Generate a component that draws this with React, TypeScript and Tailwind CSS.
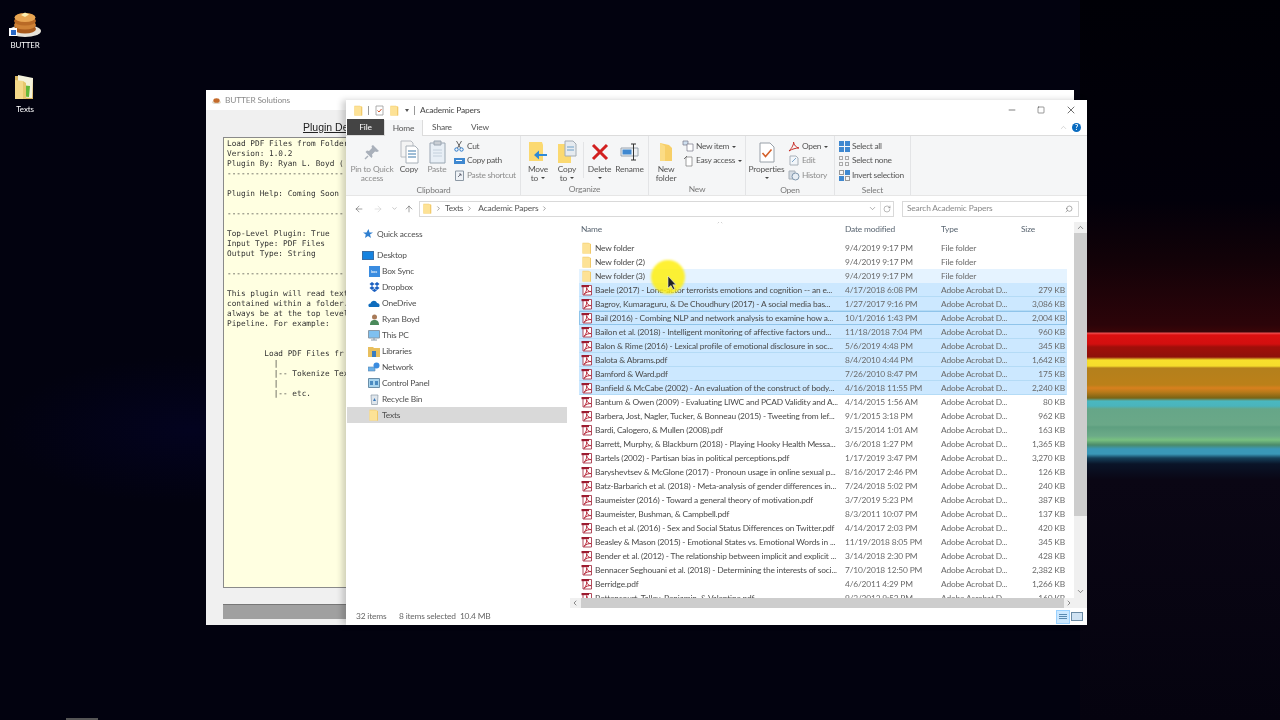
import type { ReactNode } from "react";
import { ArrowLeft, ArrowRight, ArrowUp, ChevronDown, ChevronLeft, ChevronRight, ChevronUp, Minus, RotateCw, Search, Square, X } from "lucide-react";

type FileRow = { name: string; date: string; type: string; size: string; folder?: boolean; sel?: boolean; hover?: boolean; focus?: boolean };

const pdf = "Adobe Acrobat D...";

const files: FileRow[] = [
  { name: "New folder", date: "9/4/2019 9:17 PM", type: "File folder", size: "", folder: true },
  { name: "New folder (2)", date: "9/4/2019 9:17 PM", type: "File folder", size: "", folder: true },
  { name: "New folder (3)", date: "9/4/2019 9:17 PM", type: "File folder", size: "", folder: true, hover: true },
  { name: "Baele (2017) - Lone-actor terrorists emotions and cognition -- an e...", date: "4/17/2018 6:08 PM", type: pdf, size: "279 KB", sel: true },
  { name: "Bagroy, Kumaraguru, & De Choudhury (2017) - A social media bas...", date: "1/27/2017 9:16 PM", type: pdf, size: "3,086 KB", sel: true },
  { name: "Bail (2016) - Combing NLP and network analysis to examine how a...", date: "10/1/2016 1:43 PM", type: pdf, size: "2,004 KB", sel: true, focus: true },
  { name: "Bailon et al. (2018) - Intelligent monitoring of affective factors und...", date: "11/18/2018 7:04 PM", type: pdf, size: "960 KB", sel: true },
  { name: "Balon & Rime (2016) - Lexical profile of emotional disclosure in soc...", date: "5/6/2019 4:48 PM", type: pdf, size: "345 KB", sel: true },
  { name: "Balota & Abrams.pdf", date: "8/4/2010 4:44 PM", type: pdf, size: "1,642 KB", sel: true },
  { name: "Bamford & Ward.pdf", date: "7/26/2010 8:47 PM", type: pdf, size: "175 KB", sel: true },
  { name: "Banfield & McCabe (2002) - An evaluation of the construct of body...", date: "4/16/2018 11:55 PM", type: pdf, size: "2,240 KB", sel: true },
  { name: "Bantum & Owen (2009) - Evaluating LIWC and PCAD Validity and A...", date: "4/14/2015 1:56 AM", type: pdf, size: "80 KB" },
  { name: "Barbera, Jost, Nagler, Tucker, & Bonneau (2015) - Tweeting from lef...", date: "9/1/2015 3:18 PM", type: pdf, size: "962 KB" },
  { name: "Bardi, Calogero, & Mullen (2008).pdf", date: "3/15/2014 1:01 AM", type: pdf, size: "163 KB" },
  { name: "Barrett, Murphy, & Blackburn (2018) - Playing Hooky Health Messa...", date: "3/6/2018 1:27 PM", type: pdf, size: "1,365 KB" },
  { name: "Bartels (2002) - Partisan bias in political perceptions.pdf", date: "1/17/2019 3:47 PM", type: pdf, size: "3,270 KB" },
  { name: "Baryshevtsev & McGlone (2017) - Pronoun usage in online sexual p...", date: "8/16/2017 2:46 PM", type: pdf, size: "126 KB" },
  { name: "Batz-Barbarich et al. (2018) - Meta-analysis of gender differences in...", date: "7/24/2018 5:02 PM", type: pdf, size: "240 KB" },
  { name: "Baumeister (2016) - Toward a general theory of motivation.pdf", date: "3/7/2019 5:23 PM", type: pdf, size: "387 KB" },
  { name: "Baumeister, Bushman, & Campbell.pdf", date: "8/3/2011 10:07 PM", type: pdf, size: "137 KB" },
  { name: "Beach et al. (2016) - Sex and Social Status Differences on Twitter.pdf", date: "4/14/2017 2:03 PM", type: pdf, size: "420 KB" },
  { name: "Beasley & Mason (2015) - Emotional States vs. Emotional Words in ...", date: "11/19/2018 8:05 PM", type: pdf, size: "345 KB" },
  { name: "Bender et al. (2012) - The relationship between implicit and explicit ...", date: "3/14/2018 2:30 PM", type: pdf, size: "428 KB" },
  { name: "Bennacer Seghouani et al. (2018) - Determining the interests of soci...", date: "7/10/2018 12:50 PM", type: pdf, size: "2,382 KB" },
  { name: "Berridge.pdf", date: "4/6/2011 4:29 PM", type: pdf, size: "1,266 KB" },
  { name: "Bettencourt, Talley, Benjamin, & Valentine.pdf", date: "9/3/2013 9:52 PM", type: pdf, size: "160 KB" },
];

const pluginText = [
  "Load PDF Files from Folder",
  "Version: 1.0.2",
  "Plugin By: Ryan L. Boyd (",
  "-------------------------",
  "",
  "Plugin Help: Coming Soon",
  "",
  "-------------------------",
  "",
  "Top-Level Plugin: True",
  "Input Type: PDF Files",
  "Output Type: String",
  "",
  "-------------------------",
  "",
  "This plugin will read text",
  "contained within a folder.",
  "always be at the top level",
  "Pipeline. For example:",
  "",
  "",
  "        Load PDF Files fr",
  "          |",
  "          |-- Tokenize Text",
  "          |",
  "          |-- etc.",
];

function FolderIcon({ size = 12 }: { size?: number }) {
  return (
    <svg width={size} height={size} viewBox="0 0 12 12" className="shrink-0">
      <path d="M1.500 .8h6l2.500 1.200v9.500H1.500z" fill="#f3cf76" />
      <path d="M1.500 1.500h7.500v10H1.500z" fill="#fde296" />
      <path d="M9 2h1v9.500H9z" fill="#f0c868" />
    </svg>
  );
}

function PdfIcon() {
  return (
    <svg width="12" height="12" viewBox="0 0 12 12" className="shrink-0">
      <path d="M2 1.500h8.500v9.500H2z" fill="#fff" stroke="#a8374a" strokeWidth="0.9" />
      <path d="M.5 1h7.500v2.200H.5z" fill="#9c1c30" />
      <path d="M3 10.500C5 8 6.200 5.500 5.600 3.600 6 6 7.600 7.600 10 7.600 7.600 7.400 5 8.200 3 10.500z" fill="none" stroke="#b82638" strokeWidth="1" />
    </svg>
  );
}

function Caret({ dim }: { dim?: boolean }) {
  return <span className={`inline-block ml-[3px] align-middle border-x-[2px] border-t-[2px] border-x-transparent ${dim ? "border-t-[#888]" : "border-t-[#444]"}`} />;
}

function BigButton({ icon, lines, w, ml, dim, caret }: { icon: ReactNode; lines: ReactNode[]; w: number; ml: string; dim?: boolean; caret?: boolean }) {
  return (
    <div className={`flex flex-col items-center shrink-0 ${ml} ${dim ? "text-[#8d8d8d]" : "text-[#555]"}`} style={{ width: w }}>
      <div className="h-[26px] flex items-center justify-center">{icon}</div>
      {lines.map((line, i) => (
        <div key={i} className="leading-[8.5px] whitespace-nowrap">{line}</div>
      ))}
      {caret && <span className={`mt-[3px] border-x-[2px] border-t-[2px] border-x-transparent ${dim ? "border-t-[#888]" : "border-t-[#444]"}`} />}
    </div>
  );
}

function SmallRow({ icon, label, dim, caret }: { icon: ReactNode; label: string; dim?: boolean; caret?: boolean }) {
  return (
    <div className={`flex items-center h-[14.5px] gap-[2px] whitespace-nowrap tracking-[-0.3px] ${dim ? "text-[#8d8d8d]" : "text-[#555]"}`}>
      <span className="w-[12px] h-[12px] flex items-center justify-center shrink-0">{icon}</span>
      <span>{label}{caret && <Caret dim={dim} />}</span>
    </div>
  );
}

function Group({ label, width, children }: { label: string; width: string; children: ReactNode }) {
  return (
    <div className={`flex flex-col shrink-0 border-r border-[#e3e4e6] ${width}`}>
      <div className="flex h-[47px] pt-[3px]">{children}</div>
      <div className="text-center text-[#7a7a7a] leading-[13px] pt-[1px]">{label}</div>
    </div>
  );
}

function NavItem({ icon, label, sub, selected, mt }: { icon: ReactNode; label: string; sub?: boolean; selected?: boolean; mt?: string }) {
  return (
    <div className={`flex items-center h-[16px] text-[#4e4e4e] ${mt ?? ""} ${selected ? "bg-[#d9d9d9] ml-px" : ""} ${sub ? (selected ? "pl-[21px]" : "pl-[22px]") : "pl-[16px]"}`}>
      <span className="w-[12px] flex justify-center shrink-0">{icon}</span>
      <span className={sub ? "ml-[2px]" : "ml-[3px]"}>{label}</span>
    </div>
  );
}

function Pancakes() {
  return (
    <svg width="34" height="34" viewBox="0 0 34 34">
      <ellipse cx="17" cy="25" rx="16" ry="6" fill="#e8e4da" />
      <ellipse cx="17" cy="23" rx="11" ry="4.500" fill="#a85a1c" />
      <ellipse cx="17" cy="19" rx="11" ry="4.500" fill="#cf8236" />
      <ellipse cx="17" cy="15" rx="11" ry="4.500" fill="#b96a26" />
      <ellipse cx="17" cy="11.500" rx="10.500" ry="4.500" fill="#e8a552" />
      <path d="M13 9l4-2.500 4 2-4 2.500z" fill="#fbeeb0" />
    </svg>
  );
}

function TextsFolder() {
  return (
    <svg width="24" height="28" viewBox="0 0 24 28">
      <path d="M2 3h7l2 2h9v21H2z" fill="#d9b660" />
      <path d="M5 2l15 3-1 20-14-1z" fill="#f4f2dc" />
      <path d="M7 12l10 1-1 11-9-1z" fill="#63b83a" />
      <path d="M2 7l8 1v18H2z" fill="#f4d98a" />
      <path d="M10 8l3 2v16h-3z" fill="#e6c76e" />
    </svg>
  );
}

export default function App() {
  return (
    <div className="relative w-[1280px] h-[720px] overflow-hidden bg-[radial-gradient(ellipse_at_190px_430px,#03031f_0px,#02020f_190px)] font-['Lato',sans-serif] text-[8.4px] tracking-[-0.17px] blur-[0.3px]">
      {/* wallpaper stripes on the right */}
      <div className="absolute right-0 top-0 w-[200px] h-[720px] bg-[linear-gradient(to_bottom,#000006_0px,#02000a_200px,#120208_260px,#2c0409_325px,#3a0508_332px,#f05050_333px,#dc1010_335px,#d20f0f_344px,#a00f0a_347px,#8e100a_357px,#f8e02c_360px,#f6dc2c_366px,#b4801c_368px,#bb8019_385px,#d8801e_388px,#b87a1a_392px,#7a6414_398px,#4ab8c0_401px,#4ab4bc_406px,#66a688_409px,#6aa888_425px,#5e9f80_427px,#6cab88_436px,#78c080_440px,#4a8a6a_445px,#3a98b8_449px,#3a98b8_454px,#15405a_458px,#0a1428_464px,#0a0614_480px,#05030f_720px)]" />
      <div className="absolute left-[66px] bottom-0 w-[32px] h-[2px] bg-[#555]" />

      {/* desktop icons */}
      <div className="absolute left-0 top-[6px] w-[50px] flex flex-col items-center text-white text-[8px]">
        <div className="relative h-[33px]">
          <Pancakes />
          <span className="absolute left-[1px] top-[22px] w-[8px] h-[8px] bg-white flex items-center justify-center">
            <span className="w-[5px] h-[5px] bg-[#2a6ac8]" />
          </span>
        </div>
        <span className="mt-[1px] leading-[10px]">BUTTER</span>
        <div className="mt-[23px] h-[28px]"><TextsFolder /></div>
        <span className="mt-[3px] leading-[10px]">Texts</span>
      </div>

      {/* window behind, only the part left of the explorer shows */}
      <div className="absolute left-[206px] top-[90px] w-[868px] h-[535px] flex flex-col bg-[#f0f0f0]">
        <div className="flex items-center h-[20px] bg-white pl-[6px] text-[#8a8a8a]">
          <svg width="9" height="9" viewBox="0 0 10 10"><ellipse cx="5" cy="7" rx="5" ry="2" fill="#e0d8c8" /><ellipse cx="5" cy="5" rx="3.500" ry="2.600" fill="#c46a2a" /></svg>
          <span className="ml-[4px]">BUTTER Solutions</span>
        </div>
        <div className="h-[27px] w-[140px] flex items-center pl-[97px] pt-[8px] font-['Liberation_Sans',sans-serif] text-[10.5px] tracking-normal text-[#222] underline whitespace-nowrap overflow-hidden">Plugin De</div>
        <div className="ml-[17px] w-[123px] h-[451px] bg-[#ffffe1] border border-[#8a8a8a] border-r-0 pl-[3px] pt-[1px] font-['DejaVu_Sans_Mono',monospace] text-[7.75px] tracking-normal leading-[10px] text-[#333] whitespace-pre overflow-hidden">
          {pluginText.map((line, i) => (
            <div key={i} className="h-[10px]">{line}</div>
          ))}
        </div>
        <div className="ml-[17px] mt-[16px] w-[123px] h-[15px] bg-[#a0a0a0] border-t border-[#777]" />
      </div>

      {/* explorer window */}
      <div className="absolute left-[346px] top-[100px] w-[741px] h-[525px] flex flex-col bg-white shadow-[-4px_0_6px_rgba(0,0,0,0.18)]">
        <div className="flex items-center h-[20px] pl-[7px] shrink-0 text-[#444]">
          <FolderIcon size={11} />
          <span className="ml-[4px] w-px h-[9px] bg-[#999]" />
          <svg width="11" height="11" viewBox="0 0 11 11" className="ml-[5px]"><path d="M2 1h7v9H2z" fill="#fff" stroke="#999" strokeWidth="0.8" /><path d="M3.500 5.500l1.500 1.500 2.500-3" fill="none" stroke="#d0552a" /></svg>
          <span className="ml-[4px]"><FolderIcon size={11} /></span>
          <span className="ml-[5px] border-x-[2px] border-t-[3px] border-x-transparent border-t-[#555]" />
          <span className="ml-[5px] w-px h-[9px] bg-[#999]" />
          <span className="ml-[5px]">Academic Papers</span>
          <div className="ml-auto flex items-center text-[#222]">
            <Minus size={10} strokeWidth={1.4} />
            <Square size={8} strokeWidth={1.4} className="ml-[20px]" />
            <X size={12} strokeWidth={1.3} className="ml-[20px] mr-[10px]" />
          </div>
        </div>

        <div className="flex items-end h-[16px] shrink-0 text-[#555] border-b border-[#dcdcdc]">
          <div className="ml-px w-[37px] h-[16px] bg-[#444] text-white flex items-center justify-center">File</div>
          <div className="w-[39px] h-[16px] bg-[#f5f6f7] border-x border-[#dcdcdc] flex items-center justify-center -mb-px">Home</div>
          <div className="w-[38px] h-[16px] flex items-center justify-center">Share</div>
          <div className="w-[38px] h-[16px] flex items-center justify-center">View</div>
          <div className="ml-auto h-[16px] flex items-center pr-[6px]">
            <ChevronUp size={9} strokeWidth={1} className="text-[#999]" />
            <span className="ml-[4px] w-[9px] h-[9px] rounded-full bg-[#0a6cc0] text-white font-bold text-[7px] leading-[9px] text-center">?</span>
          </div>
        </div>

        <div className="flex h-[60px] shrink-0 bg-[#f5f6f7] border-b border-[#e6e6e6] pl-px">
          <Group label="Clipboard" width="w-[174px]">
            <BigButton ml="ml-[2px]" w={46} dim lines={["Pin to Quick", "access"]} icon={
              <svg width="18" height="18" viewBox="0 0 18 18"><path d="M10 2l6 6-2 1-2-.5-3 3 .5 2-1 1.500-6-6L4 7.500l2 .5 3-3-.5-2z" fill="#a9b0ba" /><path d="M5 13l-3 3" stroke="#a9b0ba" strokeWidth="1.400" /></svg>
            } />
            <BigButton ml="ml-[3px]" w={22} lines={["Copy"]} icon={
              <svg width="19" height="24" viewBox="0 0 19 24"><path d="M1 1h10l2 2v14H1z" fill="#f4f4f4" stroke="#b8bcc2" /><path d="M6 6h9l3 3v14H6z" fill="#fff" stroke="#a8b0b8" /><path d="M8 11h8M8 14h8M8 17h8" stroke="#7fa6c8" strokeWidth="1.400" /></svg>
            } />
            <BigButton ml="ml-[6px]" w={22} dim lines={["Paste"]} icon={
              <svg width="17" height="24" viewBox="0 0 17 24"><path d="M1 3h15v20H1z" fill="#e8eff6" stroke="#9aa6b2" /><path d="M5 1h7v4H5z" fill="#c9ced4" stroke="#9aa6b2" /><path d="M4 10h9M4 13h9M4 16h9" stroke="#c4d0dc" /></svg>
            } />
            <div className="ml-[5px] flex flex-col">
              <SmallRow label="Cut" icon={<svg width="10" height="12" viewBox="0 0 10 12"><path d="M2.500 1l4 7M7.500 1l-4 7" stroke="#666" /><circle cx="2.500" cy="9.500" r="1.700" fill="none" stroke="#2a78c8" /><circle cx="7.500" cy="9.500" r="1.700" fill="none" stroke="#2a78c8" /></svg>} />
              <SmallRow label="Copy path" icon={<span className="w-[11px] h-[6px] bg-[#3f88d0] flex items-center justify-center"><span className="w-[6px] h-px bg-white" /></span>} />
              <SmallRow dim label="Paste shortcut" icon={<svg width="9" height="11" viewBox="0 0 9 11"><path d="M.5 1h8v9.500h-8z" fill="#eef2f6" stroke="#8c98a4" /><path d="M3 7l3-3M4 4h2v2" fill="none" stroke="#556" strokeWidth="0.8" /></svg>} />
            </div>
          </Group>

          <Group label="Organize" width="w-[128px]">
            <BigButton ml="ml-[6px]" w={22} lines={["Move", <>to<Caret /></>]} icon={
              <svg width="20" height="22" viewBox="0 0 20 22"><path d="M1 1h13l1 3v16H1z" fill="#fbd971" /><path d="M19 13H11V9.500L6 14l5 4.500V15h8z" fill="#2f8ad8" /></svg>
            } />
            <BigButton ml="ml-[7px]" w={22} lines={["Copy", <>to<Caret /></>]} icon={
              <svg width="20" height="24" viewBox="0 0 20 24"><path d="M1 4h13v19H1z" fill="#fbd971" /><path d="M8 1h8l3 3v12H8z" fill="#e6ebf0" stroke="#a4acb4" /><path d="M10 7h7M10 10h7" stroke="#6fa0c8" /></svg>
            } />
            <div className="ml-[5px] mt-[3px] w-px h-[36px] bg-[#e3e4e6]" />
            <BigButton ml="ml-[4px]" w={23} lines={["Delete"]} caret icon={
              <svg width="18" height="18" viewBox="0 0 18 18"><path d="M2 2l14 14M16 2L2 16" stroke="#d22020" strokeWidth="3" /></svg>
            } />
            <BigButton ml="ml-[4px]" w={29} lines={["Rename"]} icon={
              <svg width="20" height="18" viewBox="0 0 20 18"><path d="M1 5h17v8H1z" fill="#eef1f4" stroke="#9aa4ae" /><path d="M2.500 6.500h9v5h-9z" fill="#3f88d0" /><path d="M11 1h5M11 17h5M13.500 1v16" stroke="#333" /></svg>
            } />
          </Group>

          <Group label="New" width="w-[97px]">
            <BigButton ml="ml-[6px]" w={22} lines={["New", "folder"]} icon={
              <svg width="14" height="20" viewBox="0 0 14 20"><path d="M1 1l9 2 3 3v13H3z" fill="#f7cf68" /><path d="M1 1l5 3v15H1z" fill="#fbdc85" /></svg>
            } />
            <div className="ml-[5px] flex flex-col">
              <SmallRow label="New item" caret icon={<svg width="12" height="12" viewBox="0 0 12 12"><path d="M1 1h5v4H1z" fill="#cfe0f0" stroke="#778" strokeWidth="0.7" /><path d="M5 4h6v7H5z" fill="#fff" stroke="#778" strokeWidth="0.7" /></svg>} />
              <SmallRow label="Easy access" caret icon={<svg width="11" height="12" viewBox="0 0 11 12"><path d="M3 2h6v9H3z" fill="#fff" stroke="#777" strokeWidth="0.7" /><path d="M1 4l3-3" stroke="#555" strokeWidth="0.8" /></svg>} />
            </div>
          </Group>

          <Group label="Open" width="w-[89px]">
            <BigButton ml="ml-[3px]" w={35} lines={["Properties"]} caret icon={
              <svg width="16" height="21" viewBox="0 0 16 21"><path d="M1 1h10l4 4v15H1z" fill="#fff" stroke="#98a0a8" /><path d="M3.500 11l3 3.500 6-7" fill="none" stroke="#d4602a" strokeWidth="1.600" /></svg>
            } />
            <div className="ml-[4px] flex flex-col">
              <SmallRow label="Open" caret icon={<svg width="12" height="11" viewBox="0 0 12 11"><path d="M1 10C4 7 6 3 5.500 1 6 4 8 6.500 11 7 8 7 4 8 1 10z" fill="none" stroke="#c8302a" /></svg>} />
              <SmallRow dim label="Edit" icon={<svg width="10" height="11" viewBox="0 0 10 11"><path d="M1 1h6l2 2v7H1z" fill="#f2f6fa" stroke="#a8b0b8" /><path d="M3 7l4-4" stroke="#7fa6c8" /></svg>} />
              <SmallRow dim label="History" icon={<svg width="12" height="11" viewBox="0 0 12 11"><path d="M1 1h6v8H1z" fill="#d4dce4" stroke="#a8b0b8" /><circle cx="7.500" cy="6.500" r="3.500" fill="#e8eef4" stroke="#7f96ac" /></svg>} />
            </div>
          </Group>

          <Group label="Select" width="w-[76px]">
            <div className="ml-[3px] flex flex-col">
              <SmallRow label="Select all" icon={<span className="w-[11px] h-[11px] grid grid-cols-2 gap-px"><i className="bg-[#3f88d0]" /><i className="bg-[#3f88d0]" /><i className="bg-[#3f88d0]" /><i className="bg-[#3f88d0]" /></span>} />
              <SmallRow label="Select none" icon={<span className="w-[10px] h-[10px] grid grid-cols-2 gap-[2px]"><i className="border border-[#aaa]" /><i className="border border-[#aaa]" /><i className="border border-[#aaa]" /><i className="border border-[#aaa]" /></span>} />
              <SmallRow label="Invert selection" icon={<span className="w-[11px] h-[11px] grid grid-cols-2 gap-px"><i className="border border-[#999]" /><i className="bg-[#3f88d0]" /><i className="bg-[#3f88d0]" /><i className="border border-[#999]" /></span>} />
            </div>
          </Group>
        </div>

        <div className="flex items-center h-[26px] shrink-0 pb-[1px] text-[#555]">
          <ArrowLeft size={10} strokeWidth={1.2} className="ml-[8px] text-[#444]" />
          <ArrowRight size={10} strokeWidth={1.2} className="ml-[9px] text-[#c4c4c4]" />
          <ChevronDown size={7} strokeWidth={1.4} className="ml-[8px] text-[#777]" />
          <ArrowUp size={10} strokeWidth={1.2} className="ml-[6px] text-[#444]" />
          <div className="ml-[5px] w-[475px] h-[16px] border border-[#d9d9d9] flex items-center pl-[2px]">
            <FolderIcon size={11} />
            <ChevronRight size={7} className="ml-[2px] text-[#666]" />
            <span className="ml-[3px]">Texts</span>
            <ChevronRight size={7} className="ml-[3px] text-[#666]" />
            <span className="ml-[5px]">Academic Papers</span>
            <ChevronRight size={7} className="ml-[3px] text-[#666]" />
            <ChevronDown size={9} strokeWidth={1.2} className="ml-auto mr-[3px] text-[#555]" />
            <span className="w-px h-[14px] bg-[#e2e2e2]" />
            <RotateCw size={8} strokeWidth={1.2} className="mx-[2px] text-[#555]" />
          </div>
          <div className="ml-[8px] w-[177px] h-[16px] border border-[#d9d9d9] flex items-center pl-[4px] text-[#8a8a8a]">
            Search Academic Papers
            <Search size={8} strokeWidth={1.4} className="ml-auto mr-[5px] text-[#555] -scale-x-100" />
          </div>
        </div>

        <div className="flex flex-1 min-h-0">
          <div className="w-[221px] shrink-0 pt-[4px]">
            <NavItem label="Quick access" icon={<svg width="10" height="10" viewBox="0 0 10 10"><path d="M5.500 0l1 3.500H10L7 5.500 8 9 5 7 2 9l.8-3.500L0 3.500h3.500z" fill="#2f7fd0" /></svg>} />
            <NavItem mt="mt-[5px]" label="Desktop" icon={<span className="w-[12px] h-[9px] bg-[#1583e0] border border-[#3a6ea5]" />} />
            <NavItem sub label="Box Sync" icon={<span className="w-[11px] h-[11px] bg-[#3a8ce0] text-white text-[4px] leading-[11px] text-center">box</span>} />
            <NavItem sub label="Dropbox" icon={<svg width="11" height="10" viewBox="0 0 11 10"><path d="M3 0l2.500 2L3 4 .5 2zM8 0l2.500 2L8 4 5.500 2zM3 4l2.500 2L3 8 .5 6zM8 4l2.500 2L8 8 5.500 6zM3 8.500l2.500-1.800L8 8.500 5.500 10z" fill="#1a5fc0" /></svg>} />
            <NavItem sub label="OneDrive" icon={<svg width="12" height="8" viewBox="0 0 12 8"><path d="M1 8C-.5 6 1 4 2.500 4.500 3.500 1 8 1 9 4c2 0 3.500 2.500 2 4z" fill="#0f6cbd" /></svg>} />
            <NavItem sub label="Ryan Boyd" icon={<svg width="9" height="11" viewBox="0 0 9 11"><circle cx="4.500" cy="3" r="2.500" fill="#a87a58" /><path d="M0 11c0-4 2-5 4.500-5S9 7 9 11z" fill="#4a8a5a" /></svg>} />
            <NavItem sub label="This PC" icon={<svg width="12" height="11" viewBox="0 0 12 11"><path d="M.5.500h11v7.500H.5z" fill="#7fc0f0" stroke="#8a9aa8" /><path d="M3 10h6M6 8v2" stroke="#8a9aa8" /></svg>} />
            <NavItem sub label="Libraries" icon={<svg width="12" height="11" viewBox="0 0 12 11"><path d="M0 1h5l1 1h6v9H0z" fill="#e8bf5e" /><path d="M4 5h4v6H4z" fill="#3a7cc0" /></svg>} />
            <NavItem sub label="Network" icon={<svg width="12" height="11" viewBox="0 0 12 11"><path d="M0 5h7v4H0z" fill="#6ab0e8" stroke="#5a88b0" strokeWidth="0.6" /><circle cx="8.500" cy="3.500" r="3" fill="#3a8ce0" /></svg>} />
            <NavItem sub label="Control Panel" icon={<svg width="12" height="10" viewBox="0 0 12 10"><path d="M.5.500h11v9H.5z" fill="#a8d4ee" stroke="#6a8ea8" /><path d="M2 3h3v4H2zM7 3h3v4H7z" fill="#4a8ac0" /></svg>} />
            <NavItem sub label="Recycle Bin" icon={<svg width="9" height="11" viewBox="0 0 9 11"><path d="M1 1h7l-.6 9.500H1.600z" fill="#dfe6ec" stroke="#8a98a6" strokeWidth="0.7" /><path d="M3 7l1.500-3L6 7z" fill="#3a78b8" /></svg>} />
            <NavItem sub selected label="Texts" icon={<FolderIcon />} />
          </div>

          <div className="flex-1 min-w-0 flex flex-col">
            <div className="flex flex-1 min-h-0">
              <div className="flex-1 min-w-0 flex flex-col pl-[12px] pr-[7px] overflow-hidden">
                <div className="relative flex items-center h-[19px] shrink-0 pb-[5px] text-[#5a6672]">
                  <span className="absolute left-[137px] top-[-4px]"><ChevronUp size={8} strokeWidth={1} className="text-[#777]" /></span>
                  <span className="w-[266px] pl-[2px]">Name</span>
                  <span className="w-[96px]">Date modified</span>
                  <span className="w-[80px]">Type</span>
                  <span>Size</span>
                </div>
                {files.map((f) => (
                  <div
                    key={f.name}
                    className={`flex items-center h-[14px] shrink-0 text-[#555] border ${f.focus ? "border-[#8fc4ea] bg-[#cce8ff]" : f.sel ? "border-transparent border-b-[#b4dbf6] bg-[#cce8ff]" : f.hover ? "border-transparent bg-[#e5f3ff]" : "border-transparent"}`}
                  >
                    <span className="w-[15px] pl-[1px] shrink-0">{f.folder ? <FolderIcon /> : <PdfIcon />}</span>
                    <span className="w-[250px] shrink-0 whitespace-nowrap text-[#4a4a4a] pt-[1px]">{f.name}</span>
                    <span className="w-[96px] shrink-0 text-[#6a6a6a] pt-[1px]">{f.date}</span>
                    <span className="w-[80px] shrink-0 text-[#6a6a6a] pt-[1px]">{f.type}</span>
                    <span className="flex-1 text-right pr-[1px] text-[#6a6a6a] pt-[1px]">{f.size}</span>
                  </div>
                ))}
              </div>
              <div className="w-[13px] shrink-0 flex flex-col items-center bg-[#f0f0f0]">
                <ChevronUp size={9} strokeWidth={1.6} className="mt-[1px] text-[#444]" />
                <div className="mt-[1px] w-full flex-1 flex flex-col">
                  <div className="h-[283px] bg-[#cdcdcd]" />
                </div>
                <ChevronDown size={9} strokeWidth={1.6} className="mb-[2px] text-[#444]" />
              </div>
            </div>
            <div className="flex items-center h-[10px] shrink-0 ml-[3px] bg-[#f0f0f0]">
              <ChevronLeft size={8} strokeWidth={1.8} className="ml-[1px] text-[#444]" />
              <div className="ml-[2px] h-full flex-1 bg-[#cdcdcd]" />
              <ChevronRight size={8} strokeWidth={1.8} className="mx-[1px] text-[#444]" />
              <div className="w-[13px]" />
            </div>
          </div>
        </div>

        <div className="flex items-center h-[17px] shrink-0 pl-[10px] text-[#666]">
          <span className="w-[43px]">32 items</span>
          <span>8 items selected</span>
          <span className="ml-[4px]">10.4 MB</span>
          <div className="ml-auto flex items-center pr-[4px] gap-[1px]">
            <span className="w-[14px] h-[14px] bg-[#cce8ff] border border-[#99d1ff] flex flex-col justify-center gap-[1px] px-[2px]">
              <i className="h-px bg-[#5a8ab0]" /><i className="h-px bg-[#5a8ab0]" /><i className="h-px bg-[#5a8ab0]" />
            </span>
            <span className="w-[12px] h-[9px] bg-[#cfe2f2] border border-[#6a8aa4]" />
          </div>
        </div>
      </div>

      {/* pointer highlight */}
      <div className="absolute left-[651px] top-[260px] w-[34px] h-[34px] rounded-full bg-[#ffee10]/85 blur-[1px]" />
      <svg className="absolute left-[667px] top-[275px]" width="10" height="16" viewBox="0 0 10 16">
        <path d="M1 1v12l3-2.500 2 4 1.800-.8-2-4H9z" fill="#222" stroke="#eee" strokeWidth="0.6" />
      </svg>
    </div>
  );
}
